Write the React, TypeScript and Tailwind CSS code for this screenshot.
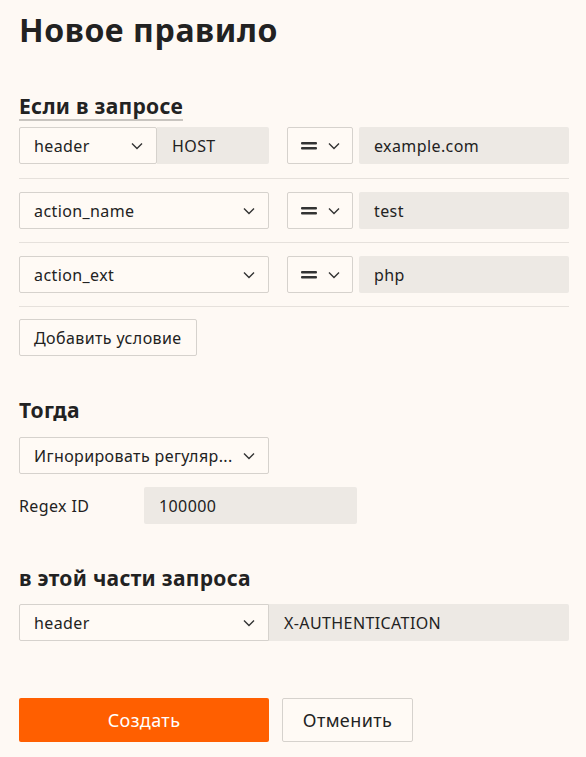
import React from "react";

const Chevron = () => (
  <svg width="12" height="8" viewBox="0 0 12 8" fill="none" className="shrink-0">
    <path d="M1 1.5L6 6.5L11 1.5" stroke="#333" strokeWidth="1.4" />
  </svg>
);

const Eq = () => (
  <svg width="16" height="10" viewBox="0 0 16 10" fill="none">
    <rect x="0" y="1" width="16" height="2.6" rx="1" fill="#333" />
    <rect x="0" y="6" width="16" height="2.6" rx="1" fill="#333" />
  </svg>
);

function Select({ value, className = "" }: { value: string; className?: string }) {
  return (
    <div
      className={
        "flex h-[37px] items-center justify-between rounded-[2px] border border-[#d6d2cd] bg-[#fffaf5] pl-[14px] pr-[13px] text-[16px] tracking-[0.4px] text-[#222] " +
        className
      }
    >
      <span className="truncate">{value}</span>
      <Chevron />
    </div>
  );
}

function Input({ value, className = "" }: { value: string; className?: string }) {
  return (
    <div
      className={
        "flex h-[37px] items-center rounded-[2px] bg-[#ede9e4] px-[15px] text-[16px] tracking-[0.4px] text-[#222] " + className
      }
    >
      {value}
    </div>
  );
}

function OpSelect() {
  return (
    <div className="flex h-[37px] w-[66px] shrink-0 items-center justify-center gap-[11px] rounded-[2px] border border-[#d6d2cd] bg-[#fffaf5]">
      <Eq />
      <Chevron />
    </div>
  );
}

export default function App() {
  return (
    <div
      className="min-h-[757px] bg-[#fef9f4] pl-[19px] pr-[17px] text-[#222]"
      style={{ fontFamily: '"Noto Sans", "Open Sans", sans-serif' }}
    >
      <h1 className="pt-[8px] text-[32px] font-bold leading-[44px] tracking-[0.6px] text-[#222]">Новое правило</h1>

      <div className="mt-[41px]">
        <h2 className="inline-block border-b-2 border-[#c9c5c0] text-[21px] font-bold leading-[26px] tracking-[0.3px]">
          Если в запросе
        </h2>
      </div>

      <div className="mt-[6px]">
        <div className="flex items-center border-b border-[#e6e1dc] pb-[14px]">
          <div className="flex w-[250px] shrink-0">
            <Select value="header" className="w-[138px] shrink-0" />
            <Input value="HOST" className="flex-1 rounded-l-none" />
          </div>
          <div className="ml-[18px]">
            <OpSelect />
          </div>
          <Input value="example.com" className="ml-[6px] flex-1" />
        </div>
        <div className="flex items-center border-b border-[#e6e1dc] pb-[13px] pt-[13px]">
          <Select value="action_name" className="w-[250px] shrink-0" />
          <div className="ml-[18px]">
            <OpSelect />
          </div>
          <Input value="test" className="ml-[6px] flex-1" />
        </div>
        <div className="flex items-center border-b border-[#e6e1dc] pb-[13px] pt-[13px]">
          <Select value="action_ext" className="w-[250px] shrink-0" />
          <div className="ml-[18px]">
            <OpSelect />
          </div>
          <Input value="php" className="ml-[6px] flex-1" />
        </div>
        <div className="pt-[12px]">
          <button className="h-[37px] rounded-[2px] border border-[#d6d2cd] bg-[#fffaf5] px-[14px] text-[16px] tracking-[0.4px] text-[#222]">
            Добавить условие
          </button>
        </div>
      </div>

      <h2 className="mt-[41px] text-[21px] font-bold leading-[26px] tracking-[0.3px]">Тогда</h2>
      <div className="mt-[14px]">
        <Select value="Игнорировать регуляр..." className="w-[250px]" />
      </div>
      <div className="mt-[13px] flex items-center">
        <span className="w-[125px] text-[16px] tracking-[0.4px]">Regex ID</span>
        <Input value="100000" className="w-[213px]" />
      </div>

      <h2 className="mt-[41px] text-[21px] font-bold leading-[26px] tracking-[0.3px]">в этой части запроса</h2>
      <div className="mt-[13px] flex">
        <Select value="header" className="w-[250px] shrink-0 rounded-r-none" />
        <Input value="X-AUTHENTICATION" className="flex-1 rounded-l-none" />
      </div>

      <div className="mt-[57px] flex gap-[13px]">
        <button className="h-[44px] w-[250px] rounded-[2px] bg-[#ff5f00] text-[18px] tracking-[0.4px] text-white">Создать</button>
        <button className="h-[44px] w-[131px] rounded-[2px] border border-[#d6d2cd] bg-[#fffaf5] text-[18px] tracking-[0.4px] text-[#222]">
          Отменить
        </button>
      </div>
    </div>
  );
}
